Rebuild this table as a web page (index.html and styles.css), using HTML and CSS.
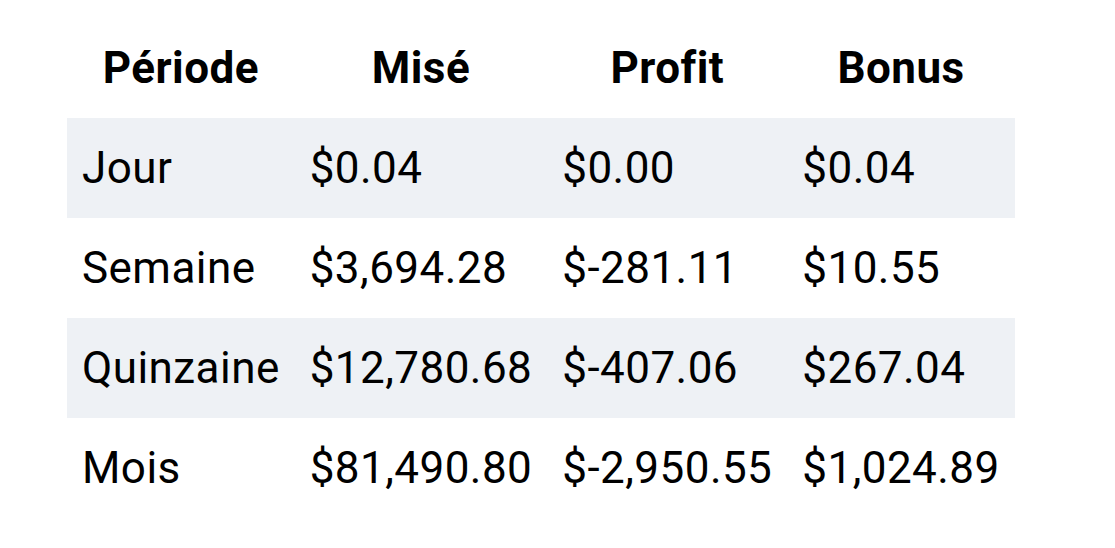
FILE: index.html
```html
<!DOCTYPE html>
<html lang="fr">
<head>
<meta charset="utf-8">
<link rel="stylesheet" href="styles.css">
</head>
<body>
<div class="wrap">
<table class="stats">
<thead>
<tr><th>Période</th><th>Misé</th><th>Profit</th><th>Bonus</th></tr>
</thead>
<tbody>
<tr class="shade"><td>Jour</td><td>$0.04</td><td>$0.00</td><td>$0.04</td></tr>
<tr><td>Semaine</td><td>$3,694.28</td><td>$-281.11</td><td>$10.55</td></tr>
<tr class="shade"><td>Quinzaine</td><td>$12,780.68</td><td>$-407.06</td><td>$267.04</td></tr>
<tr><td>Mois</td><td>$81,490.80</td><td>$-2,950.55</td><td>$1,024.89</td></tr>
</tbody>
</table>
</div>
</body>
</html>
```
FILE: styles.css
```css
html, body {
  margin: 0;
  padding: 0;
  background: #ffffff;
}
.wrap {
  padding: 18px 0 0 67px;
}
.stats {
  border-collapse: collapse;
  font-family: Roboto, "Liberation Sans", sans-serif;
  font-size: 44px;
  letter-spacing: 0.45px;
  color: #000000;
}
.stats th {
  font-weight: 700;
  text-align: center;
  height: 100px;
  padding: 0 15px;
}
.stats td {
  text-align: left;
  height: 100px;
  padding: 0 15px;
  white-space: nowrap;
}
.stats tr.shade {
  background: #eef1f5;
}
```
